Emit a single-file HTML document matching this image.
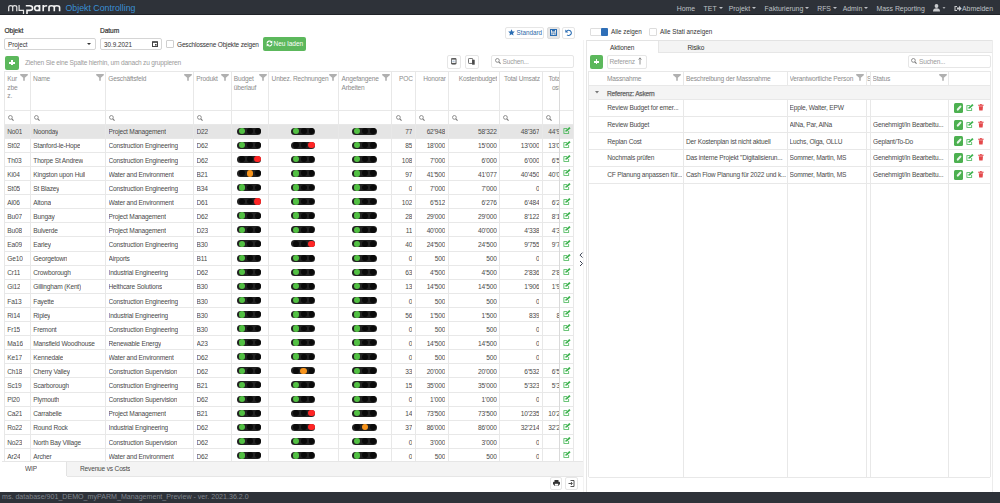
<!DOCTYPE html>
<html><head><meta charset="utf-8"><style>
*{box-sizing:border-box}
html,body{margin:0;padding:0}
body{width:1000px;height:503px;overflow:hidden;position:relative;background:#fff;font-family:"Liberation Sans",sans-serif;color:#333}
.a{position:absolute}
.nav{left:0;top:0;width:1000px;height:15.4px;background:#2e3239;border-bottom:0.6px solid #202328}
.ni{position:absolute;top:4.6px;font-size:6.9px;color:#bfc2c7;white-space:nowrap;line-height:8px}
.car{display:inline-block;width:0;height:0;border-left:2px solid transparent;border-right:2px solid transparent;border-top:2px solid #bfc2c7;vertical-align:middle;margin-left:2px;position:relative;top:-1px}
.foot{left:0;top:492px;width:1000px;height:11px;background:#2e3239;color:#80868e;font-size:7.1px;line-height:11px;padding-left:2px;white-space:nowrap}
.lbl{font-size:6.6px;font-weight:normal;-webkit-text-stroke:0.2px #333;color:#333;letter-spacing:-0.05px}
.inp{border:0.6px solid #d5d5d5;border-radius:2px;background:#fff;font-size:6.3px;color:#333;line-height:11px;padding-left:3px}
.btn{border:0.6px solid #e6e6e6;border-radius:2px;background:#fff}
.gbtn{background:#5cb85c;border-radius:2px;color:#fff}
.hl{position:absolute;background:#e8e8e8}
.vl{position:absolute;background:#e8e8e8;width:1px}
.cell{position:absolute;font-size:6.6px;letter-spacing:-0.19px;color:#4a4a4a;white-space:nowrap;line-height:8px;overflow:hidden}
.hd{position:absolute;font-size:6.6px;letter-spacing:-0.19px;color:#8c8c8c;line-height:8.5px}
.tl{position:absolute;width:24.6px;height:7px;border-radius:3.5px;background:#222}
.tl i{position:absolute;border-radius:50%}
.rc{position:absolute;font-size:6.6px;letter-spacing:-0.19px;color:#4a4a4a;white-space:nowrap;line-height:8px}
</style></head><body>

<div class="a nav"></div>
<svg class="a" style="left:0;top:0" width="64" height="16" viewBox="0 0 64 16"><g fill="none" stroke="#e6e6e6" stroke-width="1.2"><path d="M8.7 11.2V7.2Q8.7 5.6 10.7 5.6Q12.7 5.6 12.7 7.2V11.2M12.7 7.2Q12.7 5.6 14.7 5.6Q16.8 5.6 16.8 7.2V11.2"/><path d="M19.1 5V10.4H23.5M23.5 9.8V14"/></g><g fill="none" stroke="#f4f4f4" stroke-width="1.6"><path d="M25.8 5.8H29.6Q32.6 5.8 32.6 8.2Q32.6 10.4 29.6 10.4H27V14"/><path d="M39.6 5V11.2M39.6 8.2Q39.6 5.8 37.1 5.8Q34.7 5.8 34.7 8.2Q34.7 10.5 37.1 10.5Q39.6 10.5 39.6 8.2"/><path d="M43.2 11.2V5M43.2 8Q43.2 5.8 47.2 5.8"/><path d="M49 11.2V7.4Q49 5.8 51.4 5.8Q54.3 5.8 54.3 7.4V11.2M54.3 7.4Q54.3 5.8 56.6 5.8Q59.6 5.8 59.6 7.4V11.2"/></g></svg>
<div class="a" style="left:65.5px;top:3px;font-size:8.8px;color:#3a90d4;line-height:10px;white-space:nowrap">Objekt Controlling</div>
<div class="ni" style="left:676.7px">Home</div>
<div class="ni" style="left:703.6px">TET<span class="car"></span></div>
<div class="ni" style="left:728.7px">Projekt<span class="car"></span></div>
<div class="ni" style="left:764.6px">Fakturierung<span class="car"></span></div>
<div class="ni" style="left:817.2px">RFS<span class="car"></span></div>
<div class="ni" style="left:842.7px">Admin<span class="car"></span></div>
<div class="ni" style="left:876.5px">Mass Reporting</div>
<svg class="a" style="left:933px;top:4px" width="14" height="8" viewBox="0 0 14 8"><circle cx="3.5" cy="2" r="1.9" fill="#c9cbce"/><path d="M0 7.5Q0 4.2 3.5 4.2Q7 4.2 7 7.5Z" fill="#c9cbce"/><path d="M9.5 3.2H12.5L11 4.8Z" fill="#c9cbce"/></svg>
<svg class="a" style="left:954px;top:4.5px" width="8" height="7" viewBox="0 0 8 7"><path d="M0.5 1H3V2H1.5V5H3V6H0.5Z" fill="#c9cbce"/><path d="M3 2.5H5V0.8L7.7 3.5L5 6.2V4.5H3Z" fill="#c9cbce"/></svg>
<div class="ni" style="left:962px">Abmelden</div>
<div class="a foot">ms. database/901_DEMO_myPARM_Management_Preview - ver. 2021.36.2.0</div>
<div class="a lbl" style="left:4.5px;top:26.5px">Objekt</div>
<div class="a lbl" style="left:100px;top:26.5px">Datum</div>
<div class="a inp" style="left:4px;top:37.5px;width:91.5px;height:12.5px">Project</div>
<div class="a" style="left:87px;top:43px;width:0;height:0;border-left:2px solid transparent;border-right:2px solid transparent;border-top:2px solid #333"></div>
<div class="a inp" style="left:100px;top:37.5px;width:61.5px;height:12.5px">30.9.2021</div>
<svg class="a" style="left:152px;top:41px" width="6" height="6" viewBox="0 0 6 6"><rect x="0.5" y="0.8" width="5" height="4.7" fill="none" stroke="#444" stroke-width="1"/><rect x="0.5" y="0.5" width="5" height="1.3" fill="#444"/><rect x="3" y="3" width="1.6" height="1.6" fill="#444"/></svg>
<div class="a" style="left:166px;top:40px;width:8px;height:8px;border:0.6px solid #cfcfcf;border-radius:1px"></div>
<div class="a" style="left:177px;top:40.7px;font-size:6.5px;letter-spacing:-0.17px;color:#333;white-space:nowrap;line-height:8px">Geschlossene Objekte zeigen</div>
<div class="a gbtn" style="left:262.5px;top:37px;width:43px;height:14px"></div>
<svg class="a" style="left:265.5px;top:40.3px" width="7" height="7" viewBox="0 0 7 7"><path d="M1 3.5A2.5 2.5 0 0 1 5.6 2.2" fill="none" stroke="#fff" stroke-width="1.1"/><path d="M6.3 0.6V3H3.9Z" fill="#fff"/><path d="M6 3.5A2.5 2.5 0 0 1 1.4 4.8" fill="none" stroke="#fff" stroke-width="1.1"/><path d="M0.7 6.4V4H3.1Z" fill="#fff"/></svg>
<div class="a" style="left:273.5px;top:40px;font-size:6.5px;color:#fff;white-space:nowrap;line-height:8px">Neu laden</div>
<div class="a btn" style="left:504.5px;top:26.5px;width:39.5px;height:12px"></div>
<svg class="a" style="left:507.5px;top:29px" width="7" height="7" viewBox="0 0 10 10"><path d="M5 0.3L6.4 3.4L9.7 3.7L7.2 5.9L7.9 9.3L5 7.5L2.1 9.3L2.8 5.9L0.3 3.7L3.6 3.4Z" fill="#2a6db3"/></svg>
<div class="a" style="left:516.5px;top:28.5px;font-size:6.3px;color:#2f6aa8;line-height:8px">Standard</div>
<div class="a" style="left:546.5px;top:27px;width:13px;height:11.5px;background:#e6e6e6;border:0.6px solid #dcdcdc;border-radius:2px"></div>
<svg class="a" style="left:549.7px;top:29px" width="7" height="7" viewBox="0 0 7 7"><rect x="0.5" y="0.5" width="6" height="6" fill="none" stroke="#2a6db3" stroke-width="1"/><rect x="2" y="0.5" width="3" height="2" fill="#2a6db3"/><rect x="2" y="4" width="3" height="2.5" fill="none" stroke="#2a6db3" stroke-width="0.7"/></svg>
<div class="a btn" style="left:562px;top:26.5px;width:12.5px;height:12px"></div>
<svg class="a" style="left:564.8px;top:28.8px" width="7" height="7" viewBox="0 0 7 7"><path d="M1.5 2.5A2.6 2.6 0 1 1 2 5.8" fill="none" stroke="#2a6db3" stroke-width="1.1"/><path d="M0.3 0.5V3.5H3.3Z" fill="#2a6db3"/></svg>
<div class="a gbtn" style="left:5px;top:56px;width:14px;height:13.5px"></div>
<div class="a" style="left:9.3px;top:62px;width:5.4px;height:1.7px;background:#fff"></div>
<div class="a" style="left:11.15px;top:60.1px;width:1.7px;height:5.4px;background:#fff"></div>
<div class="a" style="left:25px;top:58.8px;font-size:6.6px;letter-spacing:-0.19px;color:#9b9b9b;white-space:nowrap;line-height:8px">Ziehen Sie eine Spalte hierhin, um danach zu gruppieren</div>
<div class="a btn" style="left:447px;top:54.5px;width:13.5px;height:14px"></div>
<svg class="a" style="left:450.8px;top:57.8px" width="6" height="7" viewBox="0 0 6 7"><rect x="0.45" y="0.45" width="4.6" height="5.6" rx="1" fill="none" stroke="#5a5a5a" stroke-width="0.9"/><rect x="0.3" y="0.3" width="4.9" height="1.3" fill="#555"/><rect x="0.3" y="4.9" width="4.9" height="1.3" fill="#555"/><path d="M0.6 3.25H4.9" stroke="#6a8bb0" stroke-width="0.8" stroke-dasharray="0.9 0.5"/></svg>
<div class="a btn" style="left:465px;top:54.5px;width:13.5px;height:14px"></div>
<svg class="a" style="left:468.3px;top:58.1px" width="7" height="7" viewBox="0 0 7 7"><rect x="0.45" y="0.45" width="4.3" height="5" rx="0.8" fill="#fff" stroke="#5a5a5a" stroke-width="0.9"/><rect x="4.1" y="1.8" width="2.6" height="4.9" fill="#4a4a4a"/></svg>
<div class="a btn" style="left:491px;top:55px;width:82.5px;height:13px"></div>
<svg class="a" style="left:494.5px;top:58.2px" width="6" height="6" viewBox="0 0 7 7"><circle cx="2.8" cy="2.8" r="2.2" fill="none" stroke="#7a7a7a" stroke-width="0.95"/><path d="M4.4 4.4L6.5 6.5" stroke="#7a7a7a" stroke-width="1.3"/></svg>
<div class="a" style="left:502.5px;top:57.8px;font-size:6.6px;letter-spacing:-0.19px;color:#9b9b9b;line-height:8px">Suchen...</div>
<div class="hl" style="left:4.5px;top:124.1px;width:568.8px;height:14.1px;background:#e5e5e5"></div>
<div class="hl" style="left:4.5px;top:70.80px;width:568.8px;height:1px"></div>
<div class="hl" style="left:4.5px;top:109.50px;width:568.8px;height:1px"></div>
<div class="hl" style="left:4.5px;top:123.60px;width:568.8px;height:1px"></div>
<div class="hl" style="left:4.5px;top:137.70px;width:568.8px;height:1px"></div>
<div class="hl" style="left:4.5px;top:151.80px;width:568.8px;height:1px"></div>
<div class="hl" style="left:4.5px;top:165.90px;width:568.8px;height:1px"></div>
<div class="hl" style="left:4.5px;top:180.00px;width:568.8px;height:1px"></div>
<div class="hl" style="left:4.5px;top:194.10px;width:568.8px;height:1px"></div>
<div class="hl" style="left:4.5px;top:208.20px;width:568.8px;height:1px"></div>
<div class="hl" style="left:4.5px;top:222.30px;width:568.8px;height:1px"></div>
<div class="hl" style="left:4.5px;top:236.40px;width:568.8px;height:1px"></div>
<div class="hl" style="left:4.5px;top:250.50px;width:568.8px;height:1px"></div>
<div class="hl" style="left:4.5px;top:264.60px;width:568.8px;height:1px"></div>
<div class="hl" style="left:4.5px;top:278.70px;width:568.8px;height:1px"></div>
<div class="hl" style="left:4.5px;top:292.80px;width:568.8px;height:1px"></div>
<div class="hl" style="left:4.5px;top:306.90px;width:568.8px;height:1px"></div>
<div class="hl" style="left:4.5px;top:321.00px;width:568.8px;height:1px"></div>
<div class="hl" style="left:4.5px;top:335.10px;width:568.8px;height:1px"></div>
<div class="hl" style="left:4.5px;top:349.20px;width:568.8px;height:1px"></div>
<div class="hl" style="left:4.5px;top:363.30px;width:568.8px;height:1px"></div>
<div class="hl" style="left:4.5px;top:377.40px;width:568.8px;height:1px"></div>
<div class="hl" style="left:4.5px;top:391.50px;width:568.8px;height:1px"></div>
<div class="hl" style="left:4.5px;top:405.60px;width:568.8px;height:1px"></div>
<div class="hl" style="left:4.5px;top:419.70px;width:568.8px;height:1px"></div>
<div class="hl" style="left:4.5px;top:433.80px;width:568.8px;height:1px"></div>
<div class="hl" style="left:4.5px;top:447.90px;width:568.8px;height:1px"></div>
<div class="hl" style="left:4.5px;top:462.00px;width:568.8px;height:1px"></div>
<div class="vl" style="left:4.00px;top:71.3px;height:391.2px"></div>
<div class="vl" style="left:29.80px;top:71.3px;height:391.2px"></div>
<div class="vl" style="left:105.00px;top:71.3px;height:391.2px"></div>
<div class="vl" style="left:193.00px;top:71.3px;height:391.2px"></div>
<div class="vl" style="left:230.50px;top:71.3px;height:391.2px"></div>
<div class="vl" style="left:268.30px;top:71.3px;height:391.2px"></div>
<div class="vl" style="left:338.20px;top:71.3px;height:391.2px"></div>
<div class="vl" style="left:391.30px;top:71.3px;height:391.2px"></div>
<div class="vl" style="left:414.80px;top:71.3px;height:391.2px"></div>
<div class="vl" style="left:447.80px;top:71.3px;height:391.2px"></div>
<div class="vl" style="left:499.20px;top:71.3px;height:391.2px"></div>
<div class="vl" style="left:541.90px;top:71.3px;height:391.2px"></div>
<div class="vl" style="left:559.20px;top:71.3px;height:391.2px"></div>
<div class="vl" style="left:572.80px;top:71.3px;height:391.2px"></div>
<div class="hd" style="left:7.3px;top:75.2px;white-space:nowrap">Kur<br>zbe<br>z.</div>
<div class="a" style="left:20.4px;top:74px;line-height:0"><svg width="8" height="7" viewBox="0 0 8 7"><path d="M0.2 0H7.8V1.2L4.8 3.8V6.8H3.2V3.8L0.2 1.2Z" fill="#b0b0b0"/></svg></div>
<div class="hd" style="left:33.1px;top:75.2px;white-space:nowrap">Name</div>
<div class="a" style="left:95.6px;top:74px;line-height:0"><svg width="8" height="7" viewBox="0 0 8 7"><path d="M0.2 0H7.8V1.2L4.8 3.8V6.8H3.2V3.8L0.2 1.2Z" fill="#b0b0b0"/></svg></div>
<div class="hd" style="left:108.3px;top:75.2px;white-space:nowrap">Gesch&auml;ftsfeld</div>
<div class="a" style="left:183.6px;top:74px;line-height:0"><svg width="8" height="7" viewBox="0 0 8 7"><path d="M0.2 0H7.8V1.2L4.8 3.8V6.8H3.2V3.8L0.2 1.2Z" fill="#b0b0b0"/></svg></div>
<div class="hd" style="left:196.3px;top:75.2px;white-space:nowrap">Produkt</div>
<div class="a" style="left:221.1px;top:74px;line-height:0"><svg width="8" height="7" viewBox="0 0 8 7"><path d="M0.2 0H7.8V1.2L4.8 3.8V6.8H3.2V3.8L0.2 1.2Z" fill="#b0b0b0"/></svg></div>
<div class="hd" style="left:233.8px;top:75.2px;white-space:nowrap">Budget<br>&uuml;berlauf</div>
<div class="a" style="left:258.9px;top:74px;line-height:0"><svg width="8" height="7" viewBox="0 0 8 7"><path d="M0.2 0H7.8V1.2L4.8 3.8V6.8H3.2V3.8L0.2 1.2Z" fill="#b0b0b0"/></svg></div>
<div class="hd" style="left:271.6px;top:75.2px;white-space:nowrap">Unbez. Rechnungen</div>
<div class="a" style="left:328.8px;top:74px;line-height:0"><svg width="8" height="7" viewBox="0 0 8 7"><path d="M0.2 0H7.8V1.2L4.8 3.8V6.8H3.2V3.8L0.2 1.2Z" fill="#b0b0b0"/></svg></div>
<div class="hd" style="left:341.5px;top:75.2px;white-space:nowrap">Angefangene<br>Arbeiten</div>
<div class="a" style="left:381.9px;top:74px;line-height:0"><svg width="8" height="7" viewBox="0 0 8 7"><path d="M0.2 0H7.8V1.2L4.8 3.8V6.8H3.2V3.8L0.2 1.2Z" fill="#b0b0b0"/></svg></div>
<div class="hd" style="left:392.8px;top:75.2px;width:20.0px;text-align:right;overflow:hidden;white-space:nowrap">POC</div>
<div class="hd" style="left:416.3px;top:75.2px;width:29.5px;text-align:right;overflow:hidden;white-space:nowrap">Honorar</div>
<div class="hd" style="left:449.3px;top:75.2px;width:47.9px;text-align:right;overflow:hidden;white-space:nowrap">Kostenbudget</div>
<div class="hd" style="left:500.7px;top:75.2px;width:39.2px;text-align:right;overflow:hidden;white-space:nowrap">Total Umsatz</div>
<div class="a" style="left:542.9px;top:75.2px;width:16.4px;height:20px;overflow:hidden"><div class="hd" style="left:5.6px;top:0;white-space:nowrap">Total Umsatz</div><div class="hd" style="left:9px;top:8.5px;white-space:nowrap">osten</div></div>
<div class="a" style="left:559px;top:71.3px;width:1.3px;height:391.2px;background:#dadada"></div>
<div class="a" style="left:8.2px;top:114.5px;line-height:0"><svg width="6" height="6" viewBox="0 0 7 7"><circle cx="2.8" cy="2.8" r="2.2" fill="none" stroke="#7a7a7a" stroke-width="0.95"/><path d="M4.4 4.4L6.5 6.5" stroke="#7a7a7a" stroke-width="1.3"/></svg></div>
<div class="a" style="left:34.0px;top:114.5px;line-height:0"><svg width="6" height="6" viewBox="0 0 7 7"><circle cx="2.8" cy="2.8" r="2.2" fill="none" stroke="#7a7a7a" stroke-width="0.95"/><path d="M4.4 4.4L6.5 6.5" stroke="#7a7a7a" stroke-width="1.3"/></svg></div>
<div class="a" style="left:109.2px;top:114.5px;line-height:0"><svg width="6" height="6" viewBox="0 0 7 7"><circle cx="2.8" cy="2.8" r="2.2" fill="none" stroke="#7a7a7a" stroke-width="0.95"/><path d="M4.4 4.4L6.5 6.5" stroke="#7a7a7a" stroke-width="1.3"/></svg></div>
<div class="a" style="left:197.2px;top:114.5px;line-height:0"><svg width="6" height="6" viewBox="0 0 7 7"><circle cx="2.8" cy="2.8" r="2.2" fill="none" stroke="#7a7a7a" stroke-width="0.95"/><path d="M4.4 4.4L6.5 6.5" stroke="#7a7a7a" stroke-width="1.3"/></svg></div>
<div class="a" style="left:395.5px;top:114.5px;line-height:0"><svg width="6" height="6" viewBox="0 0 7 7"><circle cx="2.8" cy="2.8" r="2.2" fill="none" stroke="#7a7a7a" stroke-width="0.95"/><path d="M4.4 4.4L6.5 6.5" stroke="#7a7a7a" stroke-width="1.3"/></svg></div>
<div class="a" style="left:419.0px;top:114.5px;line-height:0"><svg width="6" height="6" viewBox="0 0 7 7"><circle cx="2.8" cy="2.8" r="2.2" fill="none" stroke="#7a7a7a" stroke-width="0.95"/><path d="M4.4 4.4L6.5 6.5" stroke="#7a7a7a" stroke-width="1.3"/></svg></div>
<div class="a" style="left:452.0px;top:114.5px;line-height:0"><svg width="6" height="6" viewBox="0 0 7 7"><circle cx="2.8" cy="2.8" r="2.2" fill="none" stroke="#7a7a7a" stroke-width="0.95"/><path d="M4.4 4.4L6.5 6.5" stroke="#7a7a7a" stroke-width="1.3"/></svg></div>
<div class="a" style="left:503.4px;top:114.5px;line-height:0"><svg width="6" height="6" viewBox="0 0 7 7"><circle cx="2.8" cy="2.8" r="2.2" fill="none" stroke="#7a7a7a" stroke-width="0.95"/><path d="M4.4 4.4L6.5 6.5" stroke="#7a7a7a" stroke-width="1.3"/></svg></div>
<div class="a" style="left:546.1px;top:114.5px;line-height:0"><svg width="6" height="6" viewBox="0 0 7 7"><circle cx="2.8" cy="2.8" r="2.2" fill="none" stroke="#7a7a7a" stroke-width="0.95"/><path d="M4.4 4.4L6.5 6.5" stroke="#7a7a7a" stroke-width="1.3"/></svg></div>
<div class="cell" style="left:7.3px;top:128.3px">No01</div>
<div class="cell" style="left:33.3px;top:128.3px">Noonday</div>
<div class="cell" style="left:108.5px;top:128.3px">Project Management</div>
<div class="cell" style="left:196.5px;top:128.3px">D22</div>
<div class="a" style="left:236.9px;top:127.6px"><div class="tl"><i style="left:1.90px;top:0.3px;width:6.4px;height:6.4px;background:#52c043"></i><i style="left:10.00px;top:0.6px;width:5.8px;height:5.8px;background:#0a0a0a"></i><i style="left:17.90px;top:0.6px;width:5.8px;height:5.8px;background:#0a0a0a"></i></div></div>
<div class="a" style="left:290.8px;top:127.6px"><div class="tl"><i style="left:1.90px;top:0.3px;width:6.4px;height:6.4px;background:#52c043"></i><i style="left:10.00px;top:0.6px;width:5.8px;height:5.8px;background:#0a0a0a"></i><i style="left:17.90px;top:0.6px;width:5.8px;height:5.8px;background:#0a0a0a"></i></div></div>
<div class="a" style="left:352.2px;top:127.6px"><div class="tl"><i style="left:1.90px;top:0.3px;width:6.4px;height:6.4px;background:#52c043"></i><i style="left:10.00px;top:0.6px;width:5.8px;height:5.8px;background:#0a0a0a"></i><i style="left:17.90px;top:0.6px;width:5.8px;height:5.8px;background:#0a0a0a"></i></div></div>
<div class="cell" style="left:391.8px;top:128.3px;width:20.5px;text-align:right">77</div>
<div class="cell" style="left:415.3px;top:128.3px;width:30.0px;text-align:right">62&#8217;948</div>
<div class="cell" style="left:448.3px;top:128.3px;width:48.4px;text-align:right">58&#8217;322</div>
<div class="cell" style="left:499.7px;top:128.3px;width:39.7px;text-align:right">48&#8217;367</div>
<div class="a" style="left:542.9px;top:128.3px;width:16.1px;height:9px;overflow:hidden"><div class="cell" style="left:0;top:0;width:24.1px;text-align:right">44&#8217;967</div></div>
<div class="a" style="left:562.5px;top:127.0px;line-height:0"><svg width="8" height="7" viewBox="0 0 8 7"><path d="M0.5 1.2H4V2H1.3V5.9H5.3V4H6.1V6.7H0.5Z" fill="#3eb34f"/><path d="M2.3 4.8L2.7 3.3L6.3 0L7.6 1.2L4 4.4Z" fill="#3eb34f"/></svg></div>
<div class="cell" style="left:7.3px;top:142.4px">St02</div>
<div class="cell" style="left:33.3px;top:142.4px">Stanford-le-Hope</div>
<div class="cell" style="left:108.5px;top:142.4px">Construction Engineering</div>
<div class="cell" style="left:196.5px;top:142.4px">D62</div>
<div class="a" style="left:236.9px;top:141.7px"><div class="tl"><i style="left:1.90px;top:0.3px;width:6.4px;height:6.4px;background:#52c043"></i><i style="left:10.00px;top:0.6px;width:5.8px;height:5.8px;background:#0a0a0a"></i><i style="left:17.90px;top:0.6px;width:5.8px;height:5.8px;background:#0a0a0a"></i></div></div>
<div class="a" style="left:290.8px;top:141.7px"><div class="tl"><i style="left:2.20px;top:0.6px;width:5.8px;height:5.8px;background:#0a0a0a"></i><i style="left:10.00px;top:0.6px;width:5.8px;height:5.8px;background:#0a0a0a"></i><i style="left:17.60px;top:0.3px;width:6.4px;height:6.4px;background:#ff2525"></i></div></div>
<div class="a" style="left:352.2px;top:141.7px"><div class="tl"><i style="left:1.90px;top:0.3px;width:6.4px;height:6.4px;background:#52c043"></i><i style="left:10.00px;top:0.6px;width:5.8px;height:5.8px;background:#0a0a0a"></i><i style="left:17.90px;top:0.6px;width:5.8px;height:5.8px;background:#0a0a0a"></i></div></div>
<div class="cell" style="left:391.8px;top:142.4px;width:20.5px;text-align:right">85</div>
<div class="cell" style="left:415.3px;top:142.4px;width:30.0px;text-align:right">18&#8217;000</div>
<div class="cell" style="left:448.3px;top:142.4px;width:48.4px;text-align:right">15&#8217;000</div>
<div class="cell" style="left:499.7px;top:142.4px;width:39.7px;text-align:right">13&#8217;000</div>
<div class="a" style="left:542.9px;top:142.4px;width:16.1px;height:9px;overflow:hidden"><div class="cell" style="left:0;top:0;width:24.1px;text-align:right">13&#8217;000</div></div>
<div class="a" style="left:562.5px;top:141.1px;line-height:0"><svg width="8" height="7" viewBox="0 0 8 7"><path d="M0.5 1.2H4V2H1.3V5.9H5.3V4H6.1V6.7H0.5Z" fill="#3eb34f"/><path d="M2.3 4.8L2.7 3.3L6.3 0L7.6 1.2L4 4.4Z" fill="#3eb34f"/></svg></div>
<div class="cell" style="left:7.3px;top:156.5px">Th03</div>
<div class="cell" style="left:33.3px;top:156.5px">Thorpe St Andrew</div>
<div class="cell" style="left:108.5px;top:156.5px">Construction Engineering</div>
<div class="cell" style="left:196.5px;top:156.5px">D62</div>
<div class="a" style="left:236.9px;top:155.8px"><div class="tl"><i style="left:2.20px;top:0.6px;width:5.8px;height:5.8px;background:#0a0a0a"></i><i style="left:10.00px;top:0.6px;width:5.8px;height:5.8px;background:#0a0a0a"></i><i style="left:17.60px;top:0.3px;width:6.4px;height:6.4px;background:#ff2525"></i></div></div>
<div class="a" style="left:290.8px;top:155.8px"><div class="tl"><i style="left:1.90px;top:0.3px;width:6.4px;height:6.4px;background:#52c043"></i><i style="left:10.00px;top:0.6px;width:5.8px;height:5.8px;background:#0a0a0a"></i><i style="left:17.90px;top:0.6px;width:5.8px;height:5.8px;background:#0a0a0a"></i></div></div>
<div class="a" style="left:352.2px;top:155.8px"><div class="tl"><i style="left:1.90px;top:0.3px;width:6.4px;height:6.4px;background:#52c043"></i><i style="left:10.00px;top:0.6px;width:5.8px;height:5.8px;background:#0a0a0a"></i><i style="left:17.90px;top:0.6px;width:5.8px;height:5.8px;background:#0a0a0a"></i></div></div>
<div class="cell" style="left:391.8px;top:156.5px;width:20.5px;text-align:right">108</div>
<div class="cell" style="left:415.3px;top:156.5px;width:30.0px;text-align:right">7&#8217;000</div>
<div class="cell" style="left:448.3px;top:156.5px;width:48.4px;text-align:right">6&#8217;000</div>
<div class="cell" style="left:499.7px;top:156.5px;width:39.7px;text-align:right">6&#8217;000</div>
<div class="a" style="left:542.9px;top:156.5px;width:16.1px;height:9px;overflow:hidden"><div class="cell" style="left:0;top:0;width:24.1px;text-align:right">6&#8217;500</div></div>
<div class="a" style="left:562.5px;top:155.2px;line-height:0"><svg width="8" height="7" viewBox="0 0 8 7"><path d="M0.5 1.2H4V2H1.3V5.9H5.3V4H6.1V6.7H0.5Z" fill="#3eb34f"/><path d="M2.3 4.8L2.7 3.3L6.3 0L7.6 1.2L4 4.4Z" fill="#3eb34f"/></svg></div>
<div class="cell" style="left:7.3px;top:170.6px">Ki04</div>
<div class="cell" style="left:33.3px;top:170.6px">Kingston upon Hull</div>
<div class="cell" style="left:108.5px;top:170.6px">Water and Environment</div>
<div class="cell" style="left:196.5px;top:170.6px">B21</div>
<div class="a" style="left:236.9px;top:169.9px"><div class="tl"><i style="left:2.20px;top:0.6px;width:5.8px;height:5.8px;background:#0a0a0a"></i><i style="left:9.70px;top:0.3px;width:6.4px;height:6.4px;background:#f7941d"></i><i style="left:17.90px;top:0.6px;width:5.8px;height:5.8px;background:#0a0a0a"></i></div></div>
<div class="a" style="left:290.8px;top:169.9px"><div class="tl"><i style="left:1.90px;top:0.3px;width:6.4px;height:6.4px;background:#52c043"></i><i style="left:10.00px;top:0.6px;width:5.8px;height:5.8px;background:#0a0a0a"></i><i style="left:17.90px;top:0.6px;width:5.8px;height:5.8px;background:#0a0a0a"></i></div></div>
<div class="a" style="left:352.2px;top:169.9px"><div class="tl"><i style="left:1.90px;top:0.3px;width:6.4px;height:6.4px;background:#52c043"></i><i style="left:10.00px;top:0.6px;width:5.8px;height:5.8px;background:#0a0a0a"></i><i style="left:17.90px;top:0.6px;width:5.8px;height:5.8px;background:#0a0a0a"></i></div></div>
<div class="cell" style="left:391.8px;top:170.6px;width:20.5px;text-align:right">97</div>
<div class="cell" style="left:415.3px;top:170.6px;width:30.0px;text-align:right">41&#8217;500</div>
<div class="cell" style="left:448.3px;top:170.6px;width:48.4px;text-align:right">41&#8217;077</div>
<div class="cell" style="left:499.7px;top:170.6px;width:39.7px;text-align:right">40&#8217;450</div>
<div class="a" style="left:542.9px;top:170.6px;width:16.1px;height:9px;overflow:hidden"><div class="cell" style="left:0;top:0;width:24.1px;text-align:right">40&#8217;000</div></div>
<div class="a" style="left:562.5px;top:169.3px;line-height:0"><svg width="8" height="7" viewBox="0 0 8 7"><path d="M0.5 1.2H4V2H1.3V5.9H5.3V4H6.1V6.7H0.5Z" fill="#3eb34f"/><path d="M2.3 4.8L2.7 3.3L6.3 0L7.6 1.2L4 4.4Z" fill="#3eb34f"/></svg></div>
<div class="cell" style="left:7.3px;top:184.7px">St05</div>
<div class="cell" style="left:33.3px;top:184.7px">St Blazey</div>
<div class="cell" style="left:108.5px;top:184.7px">Construction Engineering</div>
<div class="cell" style="left:196.5px;top:184.7px">B34</div>
<div class="a" style="left:236.9px;top:184.0px"><div class="tl"><i style="left:1.90px;top:0.3px;width:6.4px;height:6.4px;background:#52c043"></i><i style="left:10.00px;top:0.6px;width:5.8px;height:5.8px;background:#0a0a0a"></i><i style="left:17.90px;top:0.6px;width:5.8px;height:5.8px;background:#0a0a0a"></i></div></div>
<div class="a" style="left:290.8px;top:184.0px"><div class="tl"><i style="left:1.90px;top:0.3px;width:6.4px;height:6.4px;background:#52c043"></i><i style="left:10.00px;top:0.6px;width:5.8px;height:5.8px;background:#0a0a0a"></i><i style="left:17.90px;top:0.6px;width:5.8px;height:5.8px;background:#0a0a0a"></i></div></div>
<div class="a" style="left:352.2px;top:184.0px"><div class="tl"><i style="left:1.90px;top:0.3px;width:6.4px;height:6.4px;background:#52c043"></i><i style="left:10.00px;top:0.6px;width:5.8px;height:5.8px;background:#0a0a0a"></i><i style="left:17.90px;top:0.6px;width:5.8px;height:5.8px;background:#0a0a0a"></i></div></div>
<div class="cell" style="left:391.8px;top:184.7px;width:20.5px;text-align:right">0</div>
<div class="cell" style="left:415.3px;top:184.7px;width:30.0px;text-align:right">7&#8217;000</div>
<div class="cell" style="left:448.3px;top:184.7px;width:48.4px;text-align:right">7&#8217;000</div>
<div class="cell" style="left:499.7px;top:184.7px;width:39.7px;text-align:right">0</div>
<div class="a" style="left:562.5px;top:183.4px;line-height:0"><svg width="8" height="7" viewBox="0 0 8 7"><path d="M0.5 1.2H4V2H1.3V5.9H5.3V4H6.1V6.7H0.5Z" fill="#3eb34f"/><path d="M2.3 4.8L2.7 3.3L6.3 0L7.6 1.2L4 4.4Z" fill="#3eb34f"/></svg></div>
<div class="cell" style="left:7.3px;top:198.8px">Al06</div>
<div class="cell" style="left:33.3px;top:198.8px">Altona</div>
<div class="cell" style="left:108.5px;top:198.8px">Water and Environment</div>
<div class="cell" style="left:196.5px;top:198.8px">D61</div>
<div class="a" style="left:236.9px;top:198.1px"><div class="tl"><i style="left:2.20px;top:0.6px;width:5.8px;height:5.8px;background:#0a0a0a"></i><i style="left:10.00px;top:0.6px;width:5.8px;height:5.8px;background:#0a0a0a"></i><i style="left:17.60px;top:0.3px;width:6.4px;height:6.4px;background:#ff2525"></i></div></div>
<div class="a" style="left:290.8px;top:198.1px"><div class="tl"><i style="left:1.90px;top:0.3px;width:6.4px;height:6.4px;background:#52c043"></i><i style="left:10.00px;top:0.6px;width:5.8px;height:5.8px;background:#0a0a0a"></i><i style="left:17.90px;top:0.6px;width:5.8px;height:5.8px;background:#0a0a0a"></i></div></div>
<div class="a" style="left:352.2px;top:198.1px"><div class="tl"><i style="left:1.90px;top:0.3px;width:6.4px;height:6.4px;background:#52c043"></i><i style="left:10.00px;top:0.6px;width:5.8px;height:5.8px;background:#0a0a0a"></i><i style="left:17.90px;top:0.6px;width:5.8px;height:5.8px;background:#0a0a0a"></i></div></div>
<div class="cell" style="left:391.8px;top:198.8px;width:20.5px;text-align:right">102</div>
<div class="cell" style="left:415.3px;top:198.8px;width:30.0px;text-align:right">6&#8217;512</div>
<div class="cell" style="left:448.3px;top:198.8px;width:48.4px;text-align:right">6&#8217;276</div>
<div class="cell" style="left:499.7px;top:198.8px;width:39.7px;text-align:right">6&#8217;484</div>
<div class="a" style="left:542.9px;top:198.8px;width:16.1px;height:9px;overflow:hidden"><div class="cell" style="left:0;top:0;width:24.1px;text-align:right">6&#8217;276</div></div>
<div class="a" style="left:562.5px;top:197.5px;line-height:0"><svg width="8" height="7" viewBox="0 0 8 7"><path d="M0.5 1.2H4V2H1.3V5.9H5.3V4H6.1V6.7H0.5Z" fill="#3eb34f"/><path d="M2.3 4.8L2.7 3.3L6.3 0L7.6 1.2L4 4.4Z" fill="#3eb34f"/></svg></div>
<div class="cell" style="left:7.3px;top:212.9px">Bu07</div>
<div class="cell" style="left:33.3px;top:212.9px">Bungay</div>
<div class="cell" style="left:108.5px;top:212.9px">Project Management</div>
<div class="cell" style="left:196.5px;top:212.9px">D62</div>
<div class="a" style="left:236.9px;top:212.2px"><div class="tl"><i style="left:1.90px;top:0.3px;width:6.4px;height:6.4px;background:#52c043"></i><i style="left:10.00px;top:0.6px;width:5.8px;height:5.8px;background:#0a0a0a"></i><i style="left:17.90px;top:0.6px;width:5.8px;height:5.8px;background:#0a0a0a"></i></div></div>
<div class="a" style="left:290.8px;top:212.2px"><div class="tl"><i style="left:1.90px;top:0.3px;width:6.4px;height:6.4px;background:#52c043"></i><i style="left:10.00px;top:0.6px;width:5.8px;height:5.8px;background:#0a0a0a"></i><i style="left:17.90px;top:0.6px;width:5.8px;height:5.8px;background:#0a0a0a"></i></div></div>
<div class="a" style="left:352.2px;top:212.2px"><div class="tl"><i style="left:1.90px;top:0.3px;width:6.4px;height:6.4px;background:#52c043"></i><i style="left:10.00px;top:0.6px;width:5.8px;height:5.8px;background:#0a0a0a"></i><i style="left:17.90px;top:0.6px;width:5.8px;height:5.8px;background:#0a0a0a"></i></div></div>
<div class="cell" style="left:391.8px;top:212.9px;width:20.5px;text-align:right">28</div>
<div class="cell" style="left:415.3px;top:212.9px;width:30.0px;text-align:right">29&#8217;000</div>
<div class="cell" style="left:448.3px;top:212.9px;width:48.4px;text-align:right">29&#8217;000</div>
<div class="cell" style="left:499.7px;top:212.9px;width:39.7px;text-align:right">8&#8217;122</div>
<div class="a" style="left:542.9px;top:212.9px;width:16.1px;height:9px;overflow:hidden"><div class="cell" style="left:0;top:0;width:24.1px;text-align:right">8&#8217;122</div></div>
<div class="a" style="left:562.5px;top:211.6px;line-height:0"><svg width="8" height="7" viewBox="0 0 8 7"><path d="M0.5 1.2H4V2H1.3V5.9H5.3V4H6.1V6.7H0.5Z" fill="#3eb34f"/><path d="M2.3 4.8L2.7 3.3L6.3 0L7.6 1.2L4 4.4Z" fill="#3eb34f"/></svg></div>
<div class="cell" style="left:7.3px;top:227.0px">Bu08</div>
<div class="cell" style="left:33.3px;top:227.0px">Bulverde</div>
<div class="cell" style="left:108.5px;top:227.0px">Project Management</div>
<div class="cell" style="left:196.5px;top:227.0px">D23</div>
<div class="a" style="left:236.9px;top:226.3px"><div class="tl"><i style="left:1.90px;top:0.3px;width:6.4px;height:6.4px;background:#52c043"></i><i style="left:10.00px;top:0.6px;width:5.8px;height:5.8px;background:#0a0a0a"></i><i style="left:17.90px;top:0.6px;width:5.8px;height:5.8px;background:#0a0a0a"></i></div></div>
<div class="a" style="left:290.8px;top:226.3px"><div class="tl"><i style="left:1.90px;top:0.3px;width:6.4px;height:6.4px;background:#52c043"></i><i style="left:10.00px;top:0.6px;width:5.8px;height:5.8px;background:#0a0a0a"></i><i style="left:17.90px;top:0.6px;width:5.8px;height:5.8px;background:#0a0a0a"></i></div></div>
<div class="a" style="left:352.2px;top:226.3px"><div class="tl"><i style="left:1.90px;top:0.3px;width:6.4px;height:6.4px;background:#52c043"></i><i style="left:10.00px;top:0.6px;width:5.8px;height:5.8px;background:#0a0a0a"></i><i style="left:17.90px;top:0.6px;width:5.8px;height:5.8px;background:#0a0a0a"></i></div></div>
<div class="cell" style="left:391.8px;top:227.0px;width:20.5px;text-align:right">11</div>
<div class="cell" style="left:415.3px;top:227.0px;width:30.0px;text-align:right">40&#8217;000</div>
<div class="cell" style="left:448.3px;top:227.0px;width:48.4px;text-align:right">40&#8217;000</div>
<div class="cell" style="left:499.7px;top:227.0px;width:39.7px;text-align:right">4&#8217;338</div>
<div class="a" style="left:542.9px;top:227.0px;width:16.1px;height:9px;overflow:hidden"><div class="cell" style="left:0;top:0;width:24.1px;text-align:right">4&#8217;338</div></div>
<div class="a" style="left:562.5px;top:225.7px;line-height:0"><svg width="8" height="7" viewBox="0 0 8 7"><path d="M0.5 1.2H4V2H1.3V5.9H5.3V4H6.1V6.7H0.5Z" fill="#3eb34f"/><path d="M2.3 4.8L2.7 3.3L6.3 0L7.6 1.2L4 4.4Z" fill="#3eb34f"/></svg></div>
<div class="cell" style="left:7.3px;top:241.1px">Ea09</div>
<div class="cell" style="left:33.3px;top:241.1px">Earley</div>
<div class="cell" style="left:108.5px;top:241.1px">Construction Engineering</div>
<div class="cell" style="left:196.5px;top:241.1px">B30</div>
<div class="a" style="left:236.9px;top:240.4px"><div class="tl"><i style="left:1.90px;top:0.3px;width:6.4px;height:6.4px;background:#52c043"></i><i style="left:10.00px;top:0.6px;width:5.8px;height:5.8px;background:#0a0a0a"></i><i style="left:17.90px;top:0.6px;width:5.8px;height:5.8px;background:#0a0a0a"></i></div></div>
<div class="a" style="left:290.8px;top:240.4px"><div class="tl"><i style="left:2.20px;top:0.6px;width:5.8px;height:5.8px;background:#0a0a0a"></i><i style="left:10.00px;top:0.6px;width:5.8px;height:5.8px;background:#0a0a0a"></i><i style="left:17.60px;top:0.3px;width:6.4px;height:6.4px;background:#ff2525"></i></div></div>
<div class="a" style="left:352.2px;top:240.4px"><div class="tl"><i style="left:1.90px;top:0.3px;width:6.4px;height:6.4px;background:#52c043"></i><i style="left:10.00px;top:0.6px;width:5.8px;height:5.8px;background:#0a0a0a"></i><i style="left:17.90px;top:0.6px;width:5.8px;height:5.8px;background:#0a0a0a"></i></div></div>
<div class="cell" style="left:391.8px;top:241.1px;width:20.5px;text-align:right">40</div>
<div class="cell" style="left:415.3px;top:241.1px;width:30.0px;text-align:right">24&#8217;500</div>
<div class="cell" style="left:448.3px;top:241.1px;width:48.4px;text-align:right">24&#8217;500</div>
<div class="cell" style="left:499.7px;top:241.1px;width:39.7px;text-align:right">9&#8217;755</div>
<div class="a" style="left:542.9px;top:241.1px;width:16.1px;height:9px;overflow:hidden"><div class="cell" style="left:0;top:0;width:24.1px;text-align:right">9&#8217;755</div></div>
<div class="a" style="left:562.5px;top:239.8px;line-height:0"><svg width="8" height="7" viewBox="0 0 8 7"><path d="M0.5 1.2H4V2H1.3V5.9H5.3V4H6.1V6.7H0.5Z" fill="#3eb34f"/><path d="M2.3 4.8L2.7 3.3L6.3 0L7.6 1.2L4 4.4Z" fill="#3eb34f"/></svg></div>
<div class="cell" style="left:7.3px;top:255.2px">Ge10</div>
<div class="cell" style="left:33.3px;top:255.2px">Georgetown</div>
<div class="cell" style="left:108.5px;top:255.2px">Airports</div>
<div class="cell" style="left:196.5px;top:255.2px">B11</div>
<div class="a" style="left:236.9px;top:254.5px"><div class="tl"><i style="left:1.90px;top:0.3px;width:6.4px;height:6.4px;background:#52c043"></i><i style="left:10.00px;top:0.6px;width:5.8px;height:5.8px;background:#0a0a0a"></i><i style="left:17.90px;top:0.6px;width:5.8px;height:5.8px;background:#0a0a0a"></i></div></div>
<div class="a" style="left:290.8px;top:254.5px"><div class="tl"><i style="left:1.90px;top:0.3px;width:6.4px;height:6.4px;background:#52c043"></i><i style="left:10.00px;top:0.6px;width:5.8px;height:5.8px;background:#0a0a0a"></i><i style="left:17.90px;top:0.6px;width:5.8px;height:5.8px;background:#0a0a0a"></i></div></div>
<div class="a" style="left:352.2px;top:254.5px"><div class="tl"><i style="left:1.90px;top:0.3px;width:6.4px;height:6.4px;background:#52c043"></i><i style="left:10.00px;top:0.6px;width:5.8px;height:5.8px;background:#0a0a0a"></i><i style="left:17.90px;top:0.6px;width:5.8px;height:5.8px;background:#0a0a0a"></i></div></div>
<div class="cell" style="left:391.8px;top:255.2px;width:20.5px;text-align:right">0</div>
<div class="cell" style="left:415.3px;top:255.2px;width:30.0px;text-align:right">500</div>
<div class="cell" style="left:448.3px;top:255.2px;width:48.4px;text-align:right">500</div>
<div class="cell" style="left:499.7px;top:255.2px;width:39.7px;text-align:right">0</div>
<div class="a" style="left:562.5px;top:253.9px;line-height:0"><svg width="8" height="7" viewBox="0 0 8 7"><path d="M0.5 1.2H4V2H1.3V5.9H5.3V4H6.1V6.7H0.5Z" fill="#3eb34f"/><path d="M2.3 4.8L2.7 3.3L6.3 0L7.6 1.2L4 4.4Z" fill="#3eb34f"/></svg></div>
<div class="cell" style="left:7.3px;top:269.3px">Cr11</div>
<div class="cell" style="left:33.3px;top:269.3px">Crowborough</div>
<div class="cell" style="left:108.5px;top:269.3px">Industrial Engineering</div>
<div class="cell" style="left:196.5px;top:269.3px">D62</div>
<div class="a" style="left:236.9px;top:268.6px"><div class="tl"><i style="left:1.90px;top:0.3px;width:6.4px;height:6.4px;background:#52c043"></i><i style="left:10.00px;top:0.6px;width:5.8px;height:5.8px;background:#0a0a0a"></i><i style="left:17.90px;top:0.6px;width:5.8px;height:5.8px;background:#0a0a0a"></i></div></div>
<div class="a" style="left:290.8px;top:268.6px"><div class="tl"><i style="left:1.90px;top:0.3px;width:6.4px;height:6.4px;background:#52c043"></i><i style="left:10.00px;top:0.6px;width:5.8px;height:5.8px;background:#0a0a0a"></i><i style="left:17.90px;top:0.6px;width:5.8px;height:5.8px;background:#0a0a0a"></i></div></div>
<div class="a" style="left:352.2px;top:268.6px"><div class="tl"><i style="left:1.90px;top:0.3px;width:6.4px;height:6.4px;background:#52c043"></i><i style="left:10.00px;top:0.6px;width:5.8px;height:5.8px;background:#0a0a0a"></i><i style="left:17.90px;top:0.6px;width:5.8px;height:5.8px;background:#0a0a0a"></i></div></div>
<div class="cell" style="left:391.8px;top:269.3px;width:20.5px;text-align:right">63</div>
<div class="cell" style="left:415.3px;top:269.3px;width:30.0px;text-align:right">4&#8217;500</div>
<div class="cell" style="left:448.3px;top:269.3px;width:48.4px;text-align:right">4&#8217;500</div>
<div class="cell" style="left:499.7px;top:269.3px;width:39.7px;text-align:right">2&#8217;836</div>
<div class="a" style="left:542.9px;top:269.3px;width:16.1px;height:9px;overflow:hidden"><div class="cell" style="left:0;top:0;width:24.1px;text-align:right">2&#8217;836</div></div>
<div class="a" style="left:562.5px;top:268.0px;line-height:0"><svg width="8" height="7" viewBox="0 0 8 7"><path d="M0.5 1.2H4V2H1.3V5.9H5.3V4H6.1V6.7H0.5Z" fill="#3eb34f"/><path d="M2.3 4.8L2.7 3.3L6.3 0L7.6 1.2L4 4.4Z" fill="#3eb34f"/></svg></div>
<div class="cell" style="left:7.3px;top:283.4px">Gi12</div>
<div class="cell" style="left:33.3px;top:283.4px">Gillingham (Kent)</div>
<div class="cell" style="left:108.5px;top:283.4px">Helthcare Solutions</div>
<div class="cell" style="left:196.5px;top:283.4px">B30</div>
<div class="a" style="left:236.9px;top:282.7px"><div class="tl"><i style="left:1.90px;top:0.3px;width:6.4px;height:6.4px;background:#52c043"></i><i style="left:10.00px;top:0.6px;width:5.8px;height:5.8px;background:#0a0a0a"></i><i style="left:17.90px;top:0.6px;width:5.8px;height:5.8px;background:#0a0a0a"></i></div></div>
<div class="a" style="left:290.8px;top:282.7px"><div class="tl"><i style="left:1.90px;top:0.3px;width:6.4px;height:6.4px;background:#52c043"></i><i style="left:10.00px;top:0.6px;width:5.8px;height:5.8px;background:#0a0a0a"></i><i style="left:17.90px;top:0.6px;width:5.8px;height:5.8px;background:#0a0a0a"></i></div></div>
<div class="a" style="left:352.2px;top:282.7px"><div class="tl"><i style="left:1.90px;top:0.3px;width:6.4px;height:6.4px;background:#52c043"></i><i style="left:10.00px;top:0.6px;width:5.8px;height:5.8px;background:#0a0a0a"></i><i style="left:17.90px;top:0.6px;width:5.8px;height:5.8px;background:#0a0a0a"></i></div></div>
<div class="cell" style="left:391.8px;top:283.4px;width:20.5px;text-align:right">13</div>
<div class="cell" style="left:415.3px;top:283.4px;width:30.0px;text-align:right">14&#8217;500</div>
<div class="cell" style="left:448.3px;top:283.4px;width:48.4px;text-align:right">14&#8217;500</div>
<div class="cell" style="left:499.7px;top:283.4px;width:39.7px;text-align:right">1&#8217;906</div>
<div class="a" style="left:542.9px;top:283.4px;width:16.1px;height:9px;overflow:hidden"><div class="cell" style="left:0;top:0;width:24.1px;text-align:right">1&#8217;906</div></div>
<div class="a" style="left:562.5px;top:282.1px;line-height:0"><svg width="8" height="7" viewBox="0 0 8 7"><path d="M0.5 1.2H4V2H1.3V5.9H5.3V4H6.1V6.7H0.5Z" fill="#3eb34f"/><path d="M2.3 4.8L2.7 3.3L6.3 0L7.6 1.2L4 4.4Z" fill="#3eb34f"/></svg></div>
<div class="cell" style="left:7.3px;top:297.5px">Fa13</div>
<div class="cell" style="left:33.3px;top:297.5px">Fayette</div>
<div class="cell" style="left:108.5px;top:297.5px">Construction Engineering</div>
<div class="cell" style="left:196.5px;top:297.5px">B30</div>
<div class="a" style="left:236.9px;top:296.8px"><div class="tl"><i style="left:1.90px;top:0.3px;width:6.4px;height:6.4px;background:#52c043"></i><i style="left:10.00px;top:0.6px;width:5.8px;height:5.8px;background:#0a0a0a"></i><i style="left:17.90px;top:0.6px;width:5.8px;height:5.8px;background:#0a0a0a"></i></div></div>
<div class="a" style="left:290.8px;top:296.8px"><div class="tl"><i style="left:1.90px;top:0.3px;width:6.4px;height:6.4px;background:#52c043"></i><i style="left:10.00px;top:0.6px;width:5.8px;height:5.8px;background:#0a0a0a"></i><i style="left:17.90px;top:0.6px;width:5.8px;height:5.8px;background:#0a0a0a"></i></div></div>
<div class="a" style="left:352.2px;top:296.8px"><div class="tl"><i style="left:1.90px;top:0.3px;width:6.4px;height:6.4px;background:#52c043"></i><i style="left:10.00px;top:0.6px;width:5.8px;height:5.8px;background:#0a0a0a"></i><i style="left:17.90px;top:0.6px;width:5.8px;height:5.8px;background:#0a0a0a"></i></div></div>
<div class="cell" style="left:391.8px;top:297.5px;width:20.5px;text-align:right">0</div>
<div class="cell" style="left:415.3px;top:297.5px;width:30.0px;text-align:right">500</div>
<div class="cell" style="left:448.3px;top:297.5px;width:48.4px;text-align:right">500</div>
<div class="cell" style="left:499.7px;top:297.5px;width:39.7px;text-align:right">0</div>
<div class="a" style="left:562.5px;top:296.2px;line-height:0"><svg width="8" height="7" viewBox="0 0 8 7"><path d="M0.5 1.2H4V2H1.3V5.9H5.3V4H6.1V6.7H0.5Z" fill="#3eb34f"/><path d="M2.3 4.8L2.7 3.3L6.3 0L7.6 1.2L4 4.4Z" fill="#3eb34f"/></svg></div>
<div class="cell" style="left:7.3px;top:311.6px">Ri14</div>
<div class="cell" style="left:33.3px;top:311.6px">Ripley</div>
<div class="cell" style="left:108.5px;top:311.6px">Industrial Engineering</div>
<div class="cell" style="left:196.5px;top:311.6px">B30</div>
<div class="a" style="left:236.9px;top:310.9px"><div class="tl"><i style="left:1.90px;top:0.3px;width:6.4px;height:6.4px;background:#52c043"></i><i style="left:10.00px;top:0.6px;width:5.8px;height:5.8px;background:#0a0a0a"></i><i style="left:17.90px;top:0.6px;width:5.8px;height:5.8px;background:#0a0a0a"></i></div></div>
<div class="a" style="left:290.8px;top:310.9px"><div class="tl"><i style="left:1.90px;top:0.3px;width:6.4px;height:6.4px;background:#52c043"></i><i style="left:10.00px;top:0.6px;width:5.8px;height:5.8px;background:#0a0a0a"></i><i style="left:17.90px;top:0.6px;width:5.8px;height:5.8px;background:#0a0a0a"></i></div></div>
<div class="a" style="left:352.2px;top:310.9px"><div class="tl"><i style="left:1.90px;top:0.3px;width:6.4px;height:6.4px;background:#52c043"></i><i style="left:10.00px;top:0.6px;width:5.8px;height:5.8px;background:#0a0a0a"></i><i style="left:17.90px;top:0.6px;width:5.8px;height:5.8px;background:#0a0a0a"></i></div></div>
<div class="cell" style="left:391.8px;top:311.6px;width:20.5px;text-align:right">56</div>
<div class="cell" style="left:415.3px;top:311.6px;width:30.0px;text-align:right">1&#8217;500</div>
<div class="cell" style="left:448.3px;top:311.6px;width:48.4px;text-align:right">1&#8217;500</div>
<div class="cell" style="left:499.7px;top:311.6px;width:39.7px;text-align:right">839</div>
<div class="a" style="left:542.9px;top:311.6px;width:16.1px;height:9px;overflow:hidden"><div class="cell" style="left:0;top:0;width:24.1px;text-align:right">839</div></div>
<div class="a" style="left:562.5px;top:310.3px;line-height:0"><svg width="8" height="7" viewBox="0 0 8 7"><path d="M0.5 1.2H4V2H1.3V5.9H5.3V4H6.1V6.7H0.5Z" fill="#3eb34f"/><path d="M2.3 4.8L2.7 3.3L6.3 0L7.6 1.2L4 4.4Z" fill="#3eb34f"/></svg></div>
<div class="cell" style="left:7.3px;top:325.7px">Fr15</div>
<div class="cell" style="left:33.3px;top:325.7px">Fremont</div>
<div class="cell" style="left:108.5px;top:325.7px">Construction Engineering</div>
<div class="cell" style="left:196.5px;top:325.7px">B30</div>
<div class="a" style="left:236.9px;top:325.0px"><div class="tl"><i style="left:1.90px;top:0.3px;width:6.4px;height:6.4px;background:#52c043"></i><i style="left:10.00px;top:0.6px;width:5.8px;height:5.8px;background:#0a0a0a"></i><i style="left:17.90px;top:0.6px;width:5.8px;height:5.8px;background:#0a0a0a"></i></div></div>
<div class="a" style="left:290.8px;top:325.0px"><div class="tl"><i style="left:1.90px;top:0.3px;width:6.4px;height:6.4px;background:#52c043"></i><i style="left:10.00px;top:0.6px;width:5.8px;height:5.8px;background:#0a0a0a"></i><i style="left:17.90px;top:0.6px;width:5.8px;height:5.8px;background:#0a0a0a"></i></div></div>
<div class="a" style="left:352.2px;top:325.0px"><div class="tl"><i style="left:1.90px;top:0.3px;width:6.4px;height:6.4px;background:#52c043"></i><i style="left:10.00px;top:0.6px;width:5.8px;height:5.8px;background:#0a0a0a"></i><i style="left:17.90px;top:0.6px;width:5.8px;height:5.8px;background:#0a0a0a"></i></div></div>
<div class="cell" style="left:391.8px;top:325.7px;width:20.5px;text-align:right">0</div>
<div class="cell" style="left:415.3px;top:325.7px;width:30.0px;text-align:right">500</div>
<div class="cell" style="left:448.3px;top:325.7px;width:48.4px;text-align:right">500</div>
<div class="cell" style="left:499.7px;top:325.7px;width:39.7px;text-align:right">0</div>
<div class="a" style="left:562.5px;top:324.4px;line-height:0"><svg width="8" height="7" viewBox="0 0 8 7"><path d="M0.5 1.2H4V2H1.3V5.9H5.3V4H6.1V6.7H0.5Z" fill="#3eb34f"/><path d="M2.3 4.8L2.7 3.3L6.3 0L7.6 1.2L4 4.4Z" fill="#3eb34f"/></svg></div>
<div class="cell" style="left:7.3px;top:339.8px">Ma16</div>
<div class="cell" style="left:33.3px;top:339.8px">Mansfield Woodhouse</div>
<div class="cell" style="left:108.5px;top:339.8px">Renewable Energy</div>
<div class="cell" style="left:196.5px;top:339.8px">A23</div>
<div class="a" style="left:236.9px;top:339.1px"><div class="tl"><i style="left:1.90px;top:0.3px;width:6.4px;height:6.4px;background:#52c043"></i><i style="left:10.00px;top:0.6px;width:5.8px;height:5.8px;background:#0a0a0a"></i><i style="left:17.90px;top:0.6px;width:5.8px;height:5.8px;background:#0a0a0a"></i></div></div>
<div class="a" style="left:290.8px;top:339.1px"><div class="tl"><i style="left:1.90px;top:0.3px;width:6.4px;height:6.4px;background:#52c043"></i><i style="left:10.00px;top:0.6px;width:5.8px;height:5.8px;background:#0a0a0a"></i><i style="left:17.90px;top:0.6px;width:5.8px;height:5.8px;background:#0a0a0a"></i></div></div>
<div class="a" style="left:352.2px;top:339.1px"><div class="tl"><i style="left:1.90px;top:0.3px;width:6.4px;height:6.4px;background:#52c043"></i><i style="left:10.00px;top:0.6px;width:5.8px;height:5.8px;background:#0a0a0a"></i><i style="left:17.90px;top:0.6px;width:5.8px;height:5.8px;background:#0a0a0a"></i></div></div>
<div class="cell" style="left:391.8px;top:339.8px;width:20.5px;text-align:right">0</div>
<div class="cell" style="left:415.3px;top:339.8px;width:30.0px;text-align:right">14&#8217;500</div>
<div class="cell" style="left:448.3px;top:339.8px;width:48.4px;text-align:right">14&#8217;500</div>
<div class="cell" style="left:499.7px;top:339.8px;width:39.7px;text-align:right">0</div>
<div class="a" style="left:562.5px;top:338.5px;line-height:0"><svg width="8" height="7" viewBox="0 0 8 7"><path d="M0.5 1.2H4V2H1.3V5.9H5.3V4H6.1V6.7H0.5Z" fill="#3eb34f"/><path d="M2.3 4.8L2.7 3.3L6.3 0L7.6 1.2L4 4.4Z" fill="#3eb34f"/></svg></div>
<div class="cell" style="left:7.3px;top:353.9px">Ke17</div>
<div class="cell" style="left:33.3px;top:353.9px">Kennedale</div>
<div class="cell" style="left:108.5px;top:353.9px">Water and Environment</div>
<div class="cell" style="left:196.5px;top:353.9px">D62</div>
<div class="a" style="left:236.9px;top:353.2px"><div class="tl"><i style="left:1.90px;top:0.3px;width:6.4px;height:6.4px;background:#52c043"></i><i style="left:10.00px;top:0.6px;width:5.8px;height:5.8px;background:#0a0a0a"></i><i style="left:17.90px;top:0.6px;width:5.8px;height:5.8px;background:#0a0a0a"></i></div></div>
<div class="a" style="left:290.8px;top:353.2px"><div class="tl"><i style="left:1.90px;top:0.3px;width:6.4px;height:6.4px;background:#52c043"></i><i style="left:10.00px;top:0.6px;width:5.8px;height:5.8px;background:#0a0a0a"></i><i style="left:17.90px;top:0.6px;width:5.8px;height:5.8px;background:#0a0a0a"></i></div></div>
<div class="a" style="left:352.2px;top:353.2px"><div class="tl"><i style="left:1.90px;top:0.3px;width:6.4px;height:6.4px;background:#52c043"></i><i style="left:10.00px;top:0.6px;width:5.8px;height:5.8px;background:#0a0a0a"></i><i style="left:17.90px;top:0.6px;width:5.8px;height:5.8px;background:#0a0a0a"></i></div></div>
<div class="cell" style="left:391.8px;top:353.9px;width:20.5px;text-align:right">0</div>
<div class="cell" style="left:415.3px;top:353.9px;width:30.0px;text-align:right">500</div>
<div class="cell" style="left:448.3px;top:353.9px;width:48.4px;text-align:right">500</div>
<div class="cell" style="left:499.7px;top:353.9px;width:39.7px;text-align:right">0</div>
<div class="a" style="left:562.5px;top:352.6px;line-height:0"><svg width="8" height="7" viewBox="0 0 8 7"><path d="M0.5 1.2H4V2H1.3V5.9H5.3V4H6.1V6.7H0.5Z" fill="#3eb34f"/><path d="M2.3 4.8L2.7 3.3L6.3 0L7.6 1.2L4 4.4Z" fill="#3eb34f"/></svg></div>
<div class="cell" style="left:7.3px;top:368.0px">Ch18</div>
<div class="cell" style="left:33.3px;top:368.0px">Cherry Valley</div>
<div class="cell" style="left:108.5px;top:368.0px">Construction Supervision</div>
<div class="cell" style="left:196.5px;top:368.0px">D62</div>
<div class="a" style="left:236.9px;top:367.3px"><div class="tl"><i style="left:1.90px;top:0.3px;width:6.4px;height:6.4px;background:#52c043"></i><i style="left:10.00px;top:0.6px;width:5.8px;height:5.8px;background:#0a0a0a"></i><i style="left:17.90px;top:0.6px;width:5.8px;height:5.8px;background:#0a0a0a"></i></div></div>
<div class="a" style="left:290.8px;top:367.3px"><div class="tl"><i style="left:2.20px;top:0.6px;width:5.8px;height:5.8px;background:#0a0a0a"></i><i style="left:9.70px;top:0.3px;width:6.4px;height:6.4px;background:#f7941d"></i><i style="left:17.90px;top:0.6px;width:5.8px;height:5.8px;background:#0a0a0a"></i></div></div>
<div class="a" style="left:352.2px;top:367.3px"><div class="tl"><i style="left:1.90px;top:0.3px;width:6.4px;height:6.4px;background:#52c043"></i><i style="left:10.00px;top:0.6px;width:5.8px;height:5.8px;background:#0a0a0a"></i><i style="left:17.90px;top:0.6px;width:5.8px;height:5.8px;background:#0a0a0a"></i></div></div>
<div class="cell" style="left:391.8px;top:368.0px;width:20.5px;text-align:right">33</div>
<div class="cell" style="left:415.3px;top:368.0px;width:30.0px;text-align:right">20&#8217;000</div>
<div class="cell" style="left:448.3px;top:368.0px;width:48.4px;text-align:right">20&#8217;000</div>
<div class="cell" style="left:499.7px;top:368.0px;width:39.7px;text-align:right">6&#8217;532</div>
<div class="a" style="left:542.9px;top:368.0px;width:16.1px;height:9px;overflow:hidden"><div class="cell" style="left:0;top:0;width:24.1px;text-align:right">6&#8217;500</div></div>
<div class="a" style="left:562.5px;top:366.7px;line-height:0"><svg width="8" height="7" viewBox="0 0 8 7"><path d="M0.5 1.2H4V2H1.3V5.9H5.3V4H6.1V6.7H0.5Z" fill="#3eb34f"/><path d="M2.3 4.8L2.7 3.3L6.3 0L7.6 1.2L4 4.4Z" fill="#3eb34f"/></svg></div>
<div class="cell" style="left:7.3px;top:382.1px">Sc19</div>
<div class="cell" style="left:33.3px;top:382.1px">Scarborough</div>
<div class="cell" style="left:108.5px;top:382.1px">Construction Engineering</div>
<div class="cell" style="left:196.5px;top:382.1px">B21</div>
<div class="a" style="left:236.9px;top:381.4px"><div class="tl"><i style="left:1.90px;top:0.3px;width:6.4px;height:6.4px;background:#52c043"></i><i style="left:10.00px;top:0.6px;width:5.8px;height:5.8px;background:#0a0a0a"></i><i style="left:17.90px;top:0.6px;width:5.8px;height:5.8px;background:#0a0a0a"></i></div></div>
<div class="a" style="left:290.8px;top:381.4px"><div class="tl"><i style="left:1.90px;top:0.3px;width:6.4px;height:6.4px;background:#52c043"></i><i style="left:10.00px;top:0.6px;width:5.8px;height:5.8px;background:#0a0a0a"></i><i style="left:17.90px;top:0.6px;width:5.8px;height:5.8px;background:#0a0a0a"></i></div></div>
<div class="a" style="left:352.2px;top:381.4px"><div class="tl"><i style="left:1.90px;top:0.3px;width:6.4px;height:6.4px;background:#52c043"></i><i style="left:10.00px;top:0.6px;width:5.8px;height:5.8px;background:#0a0a0a"></i><i style="left:17.90px;top:0.6px;width:5.8px;height:5.8px;background:#0a0a0a"></i></div></div>
<div class="cell" style="left:391.8px;top:382.1px;width:20.5px;text-align:right">15</div>
<div class="cell" style="left:415.3px;top:382.1px;width:30.0px;text-align:right">35&#8217;000</div>
<div class="cell" style="left:448.3px;top:382.1px;width:48.4px;text-align:right">35&#8217;000</div>
<div class="cell" style="left:499.7px;top:382.1px;width:39.7px;text-align:right">5&#8217;323</div>
<div class="a" style="left:542.9px;top:382.1px;width:16.1px;height:9px;overflow:hidden"><div class="cell" style="left:0;top:0;width:24.1px;text-align:right">5&#8217;323</div></div>
<div class="a" style="left:562.5px;top:380.8px;line-height:0"><svg width="8" height="7" viewBox="0 0 8 7"><path d="M0.5 1.2H4V2H1.3V5.9H5.3V4H6.1V6.7H0.5Z" fill="#3eb34f"/><path d="M2.3 4.8L2.7 3.3L6.3 0L7.6 1.2L4 4.4Z" fill="#3eb34f"/></svg></div>
<div class="cell" style="left:7.3px;top:396.2px">Pl20</div>
<div class="cell" style="left:33.3px;top:396.2px">Plymouth</div>
<div class="cell" style="left:108.5px;top:396.2px">Construction Supervision</div>
<div class="cell" style="left:196.5px;top:396.2px">D62</div>
<div class="a" style="left:236.9px;top:395.5px"><div class="tl"><i style="left:1.90px;top:0.3px;width:6.4px;height:6.4px;background:#52c043"></i><i style="left:10.00px;top:0.6px;width:5.8px;height:5.8px;background:#0a0a0a"></i><i style="left:17.90px;top:0.6px;width:5.8px;height:5.8px;background:#0a0a0a"></i></div></div>
<div class="a" style="left:290.8px;top:395.5px"><div class="tl"><i style="left:1.90px;top:0.3px;width:6.4px;height:6.4px;background:#52c043"></i><i style="left:10.00px;top:0.6px;width:5.8px;height:5.8px;background:#0a0a0a"></i><i style="left:17.90px;top:0.6px;width:5.8px;height:5.8px;background:#0a0a0a"></i></div></div>
<div class="a" style="left:352.2px;top:395.5px"><div class="tl"><i style="left:1.90px;top:0.3px;width:6.4px;height:6.4px;background:#52c043"></i><i style="left:10.00px;top:0.6px;width:5.8px;height:5.8px;background:#0a0a0a"></i><i style="left:17.90px;top:0.6px;width:5.8px;height:5.8px;background:#0a0a0a"></i></div></div>
<div class="cell" style="left:391.8px;top:396.2px;width:20.5px;text-align:right">0</div>
<div class="cell" style="left:415.3px;top:396.2px;width:30.0px;text-align:right">1&#8217;000</div>
<div class="cell" style="left:448.3px;top:396.2px;width:48.4px;text-align:right">1&#8217;000</div>
<div class="cell" style="left:499.7px;top:396.2px;width:39.7px;text-align:right">0</div>
<div class="a" style="left:562.5px;top:394.9px;line-height:0"><svg width="8" height="7" viewBox="0 0 8 7"><path d="M0.5 1.2H4V2H1.3V5.9H5.3V4H6.1V6.7H0.5Z" fill="#3eb34f"/><path d="M2.3 4.8L2.7 3.3L6.3 0L7.6 1.2L4 4.4Z" fill="#3eb34f"/></svg></div>
<div class="cell" style="left:7.3px;top:410.3px">Ca21</div>
<div class="cell" style="left:33.3px;top:410.3px">Carrabelle</div>
<div class="cell" style="left:108.5px;top:410.3px">Project Management</div>
<div class="cell" style="left:196.5px;top:410.3px">B21</div>
<div class="a" style="left:236.9px;top:409.6px"><div class="tl"><i style="left:1.90px;top:0.3px;width:6.4px;height:6.4px;background:#52c043"></i><i style="left:10.00px;top:0.6px;width:5.8px;height:5.8px;background:#0a0a0a"></i><i style="left:17.90px;top:0.6px;width:5.8px;height:5.8px;background:#0a0a0a"></i></div></div>
<div class="a" style="left:290.8px;top:409.6px"><div class="tl"><i style="left:2.20px;top:0.6px;width:5.8px;height:5.8px;background:#0a0a0a"></i><i style="left:10.00px;top:0.6px;width:5.8px;height:5.8px;background:#0a0a0a"></i><i style="left:17.60px;top:0.3px;width:6.4px;height:6.4px;background:#ff2525"></i></div></div>
<div class="a" style="left:352.2px;top:409.6px"><div class="tl"><i style="left:1.90px;top:0.3px;width:6.4px;height:6.4px;background:#52c043"></i><i style="left:10.00px;top:0.6px;width:5.8px;height:5.8px;background:#0a0a0a"></i><i style="left:17.90px;top:0.6px;width:5.8px;height:5.8px;background:#0a0a0a"></i></div></div>
<div class="cell" style="left:391.8px;top:410.3px;width:20.5px;text-align:right">14</div>
<div class="cell" style="left:415.3px;top:410.3px;width:30.0px;text-align:right">73&#8217;500</div>
<div class="cell" style="left:448.3px;top:410.3px;width:48.4px;text-align:right">73&#8217;500</div>
<div class="cell" style="left:499.7px;top:410.3px;width:39.7px;text-align:right">10&#8217;235</div>
<div class="a" style="left:542.9px;top:410.3px;width:16.1px;height:9px;overflow:hidden"><div class="cell" style="left:0;top:0;width:24.1px;text-align:right">10&#8217;235</div></div>
<div class="a" style="left:562.5px;top:409.0px;line-height:0"><svg width="8" height="7" viewBox="0 0 8 7"><path d="M0.5 1.2H4V2H1.3V5.9H5.3V4H6.1V6.7H0.5Z" fill="#3eb34f"/><path d="M2.3 4.8L2.7 3.3L6.3 0L7.6 1.2L4 4.4Z" fill="#3eb34f"/></svg></div>
<div class="cell" style="left:7.3px;top:424.4px">Ro22</div>
<div class="cell" style="left:33.3px;top:424.4px">Round Rock</div>
<div class="cell" style="left:108.5px;top:424.4px">Industrial Engineering</div>
<div class="cell" style="left:196.5px;top:424.4px">D62</div>
<div class="a" style="left:236.9px;top:423.7px"><div class="tl"><i style="left:1.90px;top:0.3px;width:6.4px;height:6.4px;background:#52c043"></i><i style="left:10.00px;top:0.6px;width:5.8px;height:5.8px;background:#0a0a0a"></i><i style="left:17.90px;top:0.6px;width:5.8px;height:5.8px;background:#0a0a0a"></i></div></div>
<div class="a" style="left:290.8px;top:423.7px"><div class="tl"><i style="left:2.20px;top:0.6px;width:5.8px;height:5.8px;background:#0a0a0a"></i><i style="left:10.00px;top:0.6px;width:5.8px;height:5.8px;background:#0a0a0a"></i><i style="left:17.60px;top:0.3px;width:6.4px;height:6.4px;background:#ff2525"></i></div></div>
<div class="a" style="left:352.2px;top:423.7px"><div class="tl"><i style="left:2.20px;top:0.6px;width:5.8px;height:5.8px;background:#0a0a0a"></i><i style="left:9.70px;top:0.3px;width:6.4px;height:6.4px;background:#f7941d"></i><i style="left:17.90px;top:0.6px;width:5.8px;height:5.8px;background:#0a0a0a"></i></div></div>
<div class="cell" style="left:391.8px;top:424.4px;width:20.5px;text-align:right">37</div>
<div class="cell" style="left:415.3px;top:424.4px;width:30.0px;text-align:right">86&#8217;000</div>
<div class="cell" style="left:448.3px;top:424.4px;width:48.4px;text-align:right">86&#8217;000</div>
<div class="cell" style="left:499.7px;top:424.4px;width:39.7px;text-align:right">32&#8217;214</div>
<div class="a" style="left:542.9px;top:424.4px;width:16.1px;height:9px;overflow:hidden"><div class="cell" style="left:0;top:0;width:24.1px;text-align:right">32&#8217;214</div></div>
<div class="a" style="left:562.5px;top:423.1px;line-height:0"><svg width="8" height="7" viewBox="0 0 8 7"><path d="M0.5 1.2H4V2H1.3V5.9H5.3V4H6.1V6.7H0.5Z" fill="#3eb34f"/><path d="M2.3 4.8L2.7 3.3L6.3 0L7.6 1.2L4 4.4Z" fill="#3eb34f"/></svg></div>
<div class="cell" style="left:7.3px;top:438.5px">No23</div>
<div class="cell" style="left:33.3px;top:438.5px">North Bay Village</div>
<div class="cell" style="left:108.5px;top:438.5px">Construction Supervision</div>
<div class="cell" style="left:196.5px;top:438.5px">D62</div>
<div class="a" style="left:236.9px;top:437.8px"><div class="tl"><i style="left:1.90px;top:0.3px;width:6.4px;height:6.4px;background:#52c043"></i><i style="left:10.00px;top:0.6px;width:5.8px;height:5.8px;background:#0a0a0a"></i><i style="left:17.90px;top:0.6px;width:5.8px;height:5.8px;background:#0a0a0a"></i></div></div>
<div class="a" style="left:290.8px;top:437.8px"><div class="tl"><i style="left:1.90px;top:0.3px;width:6.4px;height:6.4px;background:#52c043"></i><i style="left:10.00px;top:0.6px;width:5.8px;height:5.8px;background:#0a0a0a"></i><i style="left:17.90px;top:0.6px;width:5.8px;height:5.8px;background:#0a0a0a"></i></div></div>
<div class="a" style="left:352.2px;top:437.8px"><div class="tl"><i style="left:1.90px;top:0.3px;width:6.4px;height:6.4px;background:#52c043"></i><i style="left:10.00px;top:0.6px;width:5.8px;height:5.8px;background:#0a0a0a"></i><i style="left:17.90px;top:0.6px;width:5.8px;height:5.8px;background:#0a0a0a"></i></div></div>
<div class="cell" style="left:391.8px;top:438.5px;width:20.5px;text-align:right">0</div>
<div class="cell" style="left:415.3px;top:438.5px;width:30.0px;text-align:right">3&#8217;000</div>
<div class="cell" style="left:448.3px;top:438.5px;width:48.4px;text-align:right">3&#8217;000</div>
<div class="cell" style="left:499.7px;top:438.5px;width:39.7px;text-align:right">0</div>
<div class="a" style="left:562.5px;top:437.2px;line-height:0"><svg width="8" height="7" viewBox="0 0 8 7"><path d="M0.5 1.2H4V2H1.3V5.9H5.3V4H6.1V6.7H0.5Z" fill="#3eb34f"/><path d="M2.3 4.8L2.7 3.3L6.3 0L7.6 1.2L4 4.4Z" fill="#3eb34f"/></svg></div>
<div class="cell" style="left:7.3px;top:452.6px">Ar24</div>
<div class="cell" style="left:33.3px;top:452.6px">Archer</div>
<div class="cell" style="left:108.5px;top:452.6px">Water and Environment</div>
<div class="cell" style="left:196.5px;top:452.6px">D62</div>
<div class="a" style="left:236.9px;top:451.9px"><div class="tl"><i style="left:1.90px;top:0.3px;width:6.4px;height:6.4px;background:#52c043"></i><i style="left:10.00px;top:0.6px;width:5.8px;height:5.8px;background:#0a0a0a"></i><i style="left:17.90px;top:0.6px;width:5.8px;height:5.8px;background:#0a0a0a"></i></div></div>
<div class="a" style="left:290.8px;top:451.9px"><div class="tl"><i style="left:1.90px;top:0.3px;width:6.4px;height:6.4px;background:#52c043"></i><i style="left:10.00px;top:0.6px;width:5.8px;height:5.8px;background:#0a0a0a"></i><i style="left:17.90px;top:0.6px;width:5.8px;height:5.8px;background:#0a0a0a"></i></div></div>
<div class="a" style="left:352.2px;top:451.9px"><div class="tl"><i style="left:1.90px;top:0.3px;width:6.4px;height:6.4px;background:#52c043"></i><i style="left:10.00px;top:0.6px;width:5.8px;height:5.8px;background:#0a0a0a"></i><i style="left:17.90px;top:0.6px;width:5.8px;height:5.8px;background:#0a0a0a"></i></div></div>
<div class="cell" style="left:391.8px;top:452.6px;width:20.5px;text-align:right">0</div>
<div class="cell" style="left:415.3px;top:452.6px;width:30.0px;text-align:right">500</div>
<div class="cell" style="left:448.3px;top:452.6px;width:48.4px;text-align:right">500</div>
<div class="cell" style="left:499.7px;top:452.6px;width:39.7px;text-align:right">0</div>
<div class="a" style="left:562.5px;top:451.3px;line-height:0"><svg width="8" height="7" viewBox="0 0 8 7"><path d="M0.5 1.2H4V2H1.3V5.9H5.3V4H6.1V6.7H0.5Z" fill="#3eb34f"/><path d="M2.3 4.8L2.7 3.3L6.3 0L7.6 1.2L4 4.4Z" fill="#3eb34f"/></svg></div>
<div class="a" style="left:0;top:461.5px;width:583px;height:14.5px;background:#f4f4f4"></div>
<div class="a" style="left:0;top:461.5px;width:66.6px;height:15px;background:#fff"></div>
<div class="a" style="left:2px;top:461px;width:581px;height:1px;background:#e6e6e6"></div>
<div class="a" style="left:66.4px;top:461.5px;width:0.8px;height:15px;background:#e3e3e3"></div>
<div class="a" style="left:0;top:476px;width:583px;height:0.8px;background:#e6e6e6"></div>
<div class="a" style="left:0;top:476px;width:66.6px;height:0.8px;background:#fff"></div>
<div class="cell" style="left:25px;top:465px">WIP</div>
<div class="cell" style="left:80px;top:465px">Revenue vs Costs</div>
<div class="a btn" style="left:549.5px;top:476.5px;width:12.5px;height:13px"></div>
<svg class="a" style="left:552.5px;top:480px" width="7" height="6" viewBox="0 0 7 6"><rect x="1.5" y="0" width="4" height="2" fill="#333"/><rect x="0" y="1.8" width="7" height="3" rx="0.8" fill="#333"/><rect x="1.7" y="3.5" width="3.6" height="2.5" fill="#fff" stroke="#333" stroke-width="0.6"/></svg>
<div class="a btn" style="left:564.5px;top:476.5px;width:13px;height:13px"></div>
<svg class="a" style="left:567.5px;top:479.5px" width="7" height="7" viewBox="0 0 7 7"><path d="M2.5 0.5H6V6.5H2.5" fill="none" stroke="#444" stroke-width="0.9"/><path d="M0.5 3.5H4M3 2L4.3 3.5L3 5" fill="none" stroke="#444" stroke-width="0.9"/></svg>
<div class="a" style="left:582.6px;top:40px;width:0.8px;height:452px;background:#f3f3f3"></div>
<svg class="a" style="left:578.5px;top:251.5px" width="5" height="15" viewBox="0 0 5 15"><path d="M3.5 0.6L1 3.1L3.5 5.6" fill="none" stroke="#3a4152" stroke-width="1"/><path d="M1 9L3.5 11.5L1 14" fill="none" stroke="#3a4152" stroke-width="1"/></svg>
<div class="a" style="left:586px;top:40px;width:0.8px;height:452px;background:#e6e6e6"></div>
<div class="a" style="left:590px;top:27.5px;width:18px;height:8.5px;border:0.6px solid #dedede;border-radius:1px;background:#fff"></div>
<div class="a" style="left:600.5px;top:28px;width:7px;height:7.5px;background:#2f6fb7;border-radius:1px"></div>
<div class="a" style="left:611px;top:28.3px;font-size:6.3px;color:#333;line-height:8px;white-space:nowrap">Alle zeigen</div>
<div class="a" style="left:649px;top:27.8px;width:8px;height:8px;border:0.6px solid #dcdcdc;border-radius:1px"></div>
<div class="a" style="left:660px;top:28.3px;font-size:6.3px;color:#333;line-height:8px;white-space:nowrap">Alle Stati anzeigen</div>
<div class="a" style="left:586.5px;top:40px;width:406px;height:0.8px;background:#e3e3e3"></div>
<div class="a" style="left:991.5px;top:40px;width:0.8px;height:452px;background:#ececec"></div>
<div class="a" style="left:658px;top:40.5px;width:333.5px;height:12px;background:#f4f4f4;border-left:0.6px solid #e6e6e6;border-bottom:0.6px solid #e6e6e6"></div>
<div class="a" style="left:610px;top:43.6px;font-size:6.5px;letter-spacing:-0.15px;color:#333;line-height:8px">Aktionen</div>
<div class="a" style="left:687.4px;top:43.6px;font-size:6.5px;letter-spacing:-0.15px;color:#333;line-height:8px">Risiko</div>
<div class="a gbtn" style="left:590px;top:55px;width:13px;height:13.5px"></div>
<div class="a" style="left:593.8px;top:61px;width:5.4px;height:1.7px;background:#fff"></div>
<div class="a" style="left:595.65px;top:59.1px;width:1.7px;height:5.4px;background:#fff"></div>
<div class="a btn" style="left:607px;top:54.5px;width:40px;height:14px"></div>
<div class="a" style="left:609.5px;top:58.3px;font-size:6.6px;letter-spacing:-0.19px;color:#9b9b9b;line-height:8px">Referenz</div>
<svg class="a" style="left:638px;top:56.5px" width="4" height="8" viewBox="0 0 4 8"><path d="M2 7.5V1M0.6 2.6L2 0.8L3.4 2.6" fill="none" stroke="#777" stroke-width="0.8"/></svg>
<div class="a btn" style="left:907.5px;top:54.7px;width:83px;height:13px"></div>
<svg class="a" style="left:910.9px;top:58.1px" width="6" height="6" viewBox="0 0 7 7"><circle cx="2.8" cy="2.8" r="2.2" fill="none" stroke="#7a7a7a" stroke-width="0.95"/><path d="M4.4 4.4L6.5 6.5" stroke="#7a7a7a" stroke-width="1.3"/></svg>
<div class="a" style="left:919px;top:57.6px;font-size:6.6px;letter-spacing:-0.19px;color:#9b9b9b;line-height:8px">Suchen...</div>
<div class="a" style="left:588.6px;top:85.2px;width:401.9px;height:14.3px;background:#f4f4f4"></div>
<div class="hl" style="left:588.6px;top:70.70px;width:401.9px;height:1px"></div>
<div class="hl" style="left:588.6px;top:84.70px;width:401.9px;height:1px"></div>
<div class="hl" style="left:588.6px;top:99.00px;width:401.9px;height:1px"></div>
<div class="hl" style="left:588.6px;top:115.70px;width:401.9px;height:1px"></div>
<div class="hl" style="left:588.6px;top:132.40px;width:401.9px;height:1px"></div>
<div class="hl" style="left:588.6px;top:149.10px;width:401.9px;height:1px"></div>
<div class="hl" style="left:588.6px;top:165.80px;width:401.9px;height:1px"></div>
<div class="hl" style="left:588.6px;top:182.50px;width:401.9px;height:1px"></div>
<div class="hl" style="left:588.6px;top:476.50px;width:401.9px;height:1px"></div>
<div class="vl" style="left:588.10px;top:71.2px;height:405.8px"></div>
<div class="vl" style="left:682.50px;top:71.2px;height:14.0px"></div>
<div class="vl" style="left:682.50px;top:99.5px;height:377.5px"></div>
<div class="vl" style="left:787.20px;top:71.2px;height:14.0px"></div>
<div class="vl" style="left:787.20px;top:99.5px;height:377.5px"></div>
<div class="vl" style="left:865.50px;top:71.2px;height:14.0px"></div>
<div class="vl" style="left:865.50px;top:99.5px;height:377.5px"></div>
<div class="vl" style="left:869.90px;top:71.2px;height:14.0px"></div>
<div class="vl" style="left:869.90px;top:99.5px;height:377.5px"></div>
<div class="vl" style="left:948.10px;top:71.2px;height:14.0px"></div>
<div class="vl" style="left:948.10px;top:99.5px;height:377.5px"></div>
<div class="vl" style="left:990.00px;top:71.2px;height:405.8px"></div>
<div class="hd" style="left:607.0px;top:74.7px;white-space:nowrap;overflow:hidden;width:75.4px">Massnahme</div>
<div class="a" style="left:673.1px;top:74.2px;line-height:0"><svg width="8" height="7" viewBox="0 0 8 7"><path d="M0.2 0H7.8V1.2L4.8 3.8V6.8H3.2V3.8L0.2 1.2Z" fill="#b0b0b0"/></svg></div>
<div class="hd" style="left:686.0px;top:74.7px;white-space:nowrap;overflow:hidden;width:101.1px">Beschreibung der Massnahme</div>
<div class="hd" style="left:789.5px;top:74.7px;white-space:nowrap;overflow:hidden;width:75.9px">Verantwortliche Person</div>
<div class="a" style="left:856.1px;top:74.2px;line-height:0"><svg width="8" height="7" viewBox="0 0 8 7"><path d="M0.2 0H7.8V1.2L4.8 3.8V6.8H3.2V3.8L0.2 1.2Z" fill="#b0b0b0"/></svg></div>
<div class="hd" style="left:867.0px;top:74.7px;white-space:nowrap;overflow:hidden;width:2.8px">S</div>
<div class="hd" style="left:872.5px;top:74.7px;white-space:nowrap;overflow:hidden;width:75.5px">Status</div>
<div class="a" style="left:938.7px;top:74.2px;line-height:0"><svg width="8" height="7" viewBox="0 0 8 7"><path d="M0.2 0H7.8V1.2L4.8 3.8V6.8H3.2V3.8L0.2 1.2Z" fill="#b0b0b0"/></svg></div>
<svg class="a" style="left:595px;top:90.5px" width="4" height="3" viewBox="0 0 4 3"><path d="M0 0H4L2 2.5Z" fill="#777"/></svg>
<div class="rc" style="left:607px;top:89.6px;color:#666;-webkit-text-stroke:0.25px #666">Referenz: Askern</div>
<div class="rc" style="left:607.3px;top:104.2px;width:75px;overflow:hidden">Review Budget for emer...</div>
<div class="rc" style="left:789.5px;top:104.2px;width:76px;overflow:hidden">Epple, Walter, EPW</div>
<div class="a" style="left:954px;top:103.0px;width:9px;height:10px;background:#4cb050;border-radius:1.5px"></div>
<svg class="a" style="left:955.5px;top:104.5px" width="6" height="7" viewBox="0 0 6 7"><path d="M1.2 5.6Q0.2 4.6 1.2 3.4L3.6 0.9Q4.5 0.1 5.2 0.8Q5.9 1.6 5 2.5L2.6 5.2Q1.9 5.9 1.2 5.6Z" fill="#e8f5e8"/></svg>
<div class="a" style="left:966px;top:104.3px;line-height:0"><svg width="8" height="7" viewBox="0 0 8 7"><path d="M0.5 1.2H4V2H1.3V5.9H5.3V4H6.1V6.7H0.5Z" fill="#3eb34f"/><path d="M2.3 4.8L2.7 3.3L6.3 0L7.6 1.2L4 4.4Z" fill="#3eb34f"/></svg></div>
<svg class="a" style="left:977.5px;top:104.3px" width="6" height="7" viewBox="0 0 6 7"><rect x="0.2" y="0.7" width="5.4" height="1.1" fill="#e4484a"/><rect x="2" y="0.1" width="1.8" height="0.9" fill="#e4484a"/><path d="M0.8 2.2H5L4.6 6.6H1.2Z" fill="#e4484a"/></svg>
<div class="rc" style="left:607.3px;top:120.9px;width:75px;overflow:hidden">Review Budget</div>
<div class="rc" style="left:789.5px;top:120.9px;width:76px;overflow:hidden">AlNa, Par, AlNa</div>
<div class="rc" style="left:873px;top:120.9px;width:75px;overflow:hidden">Genehmigt/In Bearbeitu...</div>
<div class="a" style="left:954px;top:119.7px;width:9px;height:10px;background:#4cb050;border-radius:1.5px"></div>
<svg class="a" style="left:955.5px;top:121.2px" width="6" height="7" viewBox="0 0 6 7"><path d="M1.2 5.6Q0.2 4.6 1.2 3.4L3.6 0.9Q4.5 0.1 5.2 0.8Q5.9 1.6 5 2.5L2.6 5.2Q1.9 5.9 1.2 5.6Z" fill="#e8f5e8"/></svg>
<div class="a" style="left:966px;top:121.0px;line-height:0"><svg width="8" height="7" viewBox="0 0 8 7"><path d="M0.5 1.2H4V2H1.3V5.9H5.3V4H6.1V6.7H0.5Z" fill="#3eb34f"/><path d="M2.3 4.8L2.7 3.3L6.3 0L7.6 1.2L4 4.4Z" fill="#3eb34f"/></svg></div>
<svg class="a" style="left:977.5px;top:121.0px" width="6" height="7" viewBox="0 0 6 7"><rect x="0.2" y="0.7" width="5.4" height="1.1" fill="#e4484a"/><rect x="2" y="0.1" width="1.8" height="0.9" fill="#e4484a"/><path d="M0.8 2.2H5L4.6 6.6H1.2Z" fill="#e4484a"/></svg>
<div class="rc" style="left:607.3px;top:137.6px;width:75px;overflow:hidden">Replan Cost</div>
<div class="rc" style="left:686px;top:137.6px;width:101px;overflow:hidden">Der Kostenplan ist nicht aktuell</div>
<div class="rc" style="left:789.5px;top:137.6px;width:76px;overflow:hidden">Luchs, Olga, OLLU</div>
<div class="rc" style="left:873px;top:137.6px;width:75px;overflow:hidden">Geplant/To-Do</div>
<div class="a" style="left:954px;top:136.4px;width:9px;height:10px;background:#4cb050;border-radius:1.5px"></div>
<svg class="a" style="left:955.5px;top:137.9px" width="6" height="7" viewBox="0 0 6 7"><path d="M1.2 5.6Q0.2 4.6 1.2 3.4L3.6 0.9Q4.5 0.1 5.2 0.8Q5.9 1.6 5 2.5L2.6 5.2Q1.9 5.9 1.2 5.6Z" fill="#e8f5e8"/></svg>
<div class="a" style="left:966px;top:137.7px;line-height:0"><svg width="8" height="7" viewBox="0 0 8 7"><path d="M0.5 1.2H4V2H1.3V5.9H5.3V4H6.1V6.7H0.5Z" fill="#3eb34f"/><path d="M2.3 4.8L2.7 3.3L6.3 0L7.6 1.2L4 4.4Z" fill="#3eb34f"/></svg></div>
<svg class="a" style="left:977.5px;top:137.7px" width="6" height="7" viewBox="0 0 6 7"><rect x="0.2" y="0.7" width="5.4" height="1.1" fill="#e4484a"/><rect x="2" y="0.1" width="1.8" height="0.9" fill="#e4484a"/><path d="M0.8 2.2H5L4.6 6.6H1.2Z" fill="#e4484a"/></svg>
<div class="rc" style="left:607.3px;top:154.3px;width:75px;overflow:hidden">Nochmals pr&uuml;fen</div>
<div class="rc" style="left:686px;top:154.3px;width:101px;overflow:hidden">Das interne Projekt &quot;Digitalisierun...</div>
<div class="rc" style="left:789.5px;top:154.3px;width:76px;overflow:hidden">Sommer, Martin, MS</div>
<div class="rc" style="left:873px;top:154.3px;width:75px;overflow:hidden">Genehmigt/In Bearbeitu...</div>
<div class="a" style="left:954px;top:153.1px;width:9px;height:10px;background:#4cb050;border-radius:1.5px"></div>
<svg class="a" style="left:955.5px;top:154.6px" width="6" height="7" viewBox="0 0 6 7"><path d="M1.2 5.6Q0.2 4.6 1.2 3.4L3.6 0.9Q4.5 0.1 5.2 0.8Q5.9 1.6 5 2.5L2.6 5.2Q1.9 5.9 1.2 5.6Z" fill="#e8f5e8"/></svg>
<div class="a" style="left:966px;top:154.4px;line-height:0"><svg width="8" height="7" viewBox="0 0 8 7"><path d="M0.5 1.2H4V2H1.3V5.9H5.3V4H6.1V6.7H0.5Z" fill="#3eb34f"/><path d="M2.3 4.8L2.7 3.3L6.3 0L7.6 1.2L4 4.4Z" fill="#3eb34f"/></svg></div>
<svg class="a" style="left:977.5px;top:154.4px" width="6" height="7" viewBox="0 0 6 7"><rect x="0.2" y="0.7" width="5.4" height="1.1" fill="#e4484a"/><rect x="2" y="0.1" width="1.8" height="0.9" fill="#e4484a"/><path d="M0.8 2.2H5L4.6 6.6H1.2Z" fill="#e4484a"/></svg>
<div class="rc" style="left:607.3px;top:171.0px;width:75px;overflow:hidden">CF Planung anpassen f&uuml;r...</div>
<div class="rc" style="left:686px;top:171.0px;width:101px;overflow:hidden">Cash Flow Planung f&uuml;r 2022 und k...</div>
<div class="rc" style="left:789.5px;top:171.0px;width:76px;overflow:hidden">Sommer, Martin, MS</div>
<div class="rc" style="left:873px;top:171.0px;width:75px;overflow:hidden">Genehmigt/In Bearbeitu...</div>
<div class="a" style="left:954px;top:169.8px;width:9px;height:10px;background:#4cb050;border-radius:1.5px"></div>
<svg class="a" style="left:955.5px;top:171.3px" width="6" height="7" viewBox="0 0 6 7"><path d="M1.2 5.6Q0.2 4.6 1.2 3.4L3.6 0.9Q4.5 0.1 5.2 0.8Q5.9 1.6 5 2.5L2.6 5.2Q1.9 5.9 1.2 5.6Z" fill="#e8f5e8"/></svg>
<div class="a" style="left:966px;top:171.1px;line-height:0"><svg width="8" height="7" viewBox="0 0 8 7"><path d="M0.5 1.2H4V2H1.3V5.9H5.3V4H6.1V6.7H0.5Z" fill="#3eb34f"/><path d="M2.3 4.8L2.7 3.3L6.3 0L7.6 1.2L4 4.4Z" fill="#3eb34f"/></svg></div>
<svg class="a" style="left:977.5px;top:171.1px" width="6" height="7" viewBox="0 0 6 7"><rect x="0.2" y="0.7" width="5.4" height="1.1" fill="#e4484a"/><rect x="2" y="0.1" width="1.8" height="0.9" fill="#e4484a"/><path d="M0.8 2.2H5L4.6 6.6H1.2Z" fill="#e4484a"/></svg>
</body></html>
